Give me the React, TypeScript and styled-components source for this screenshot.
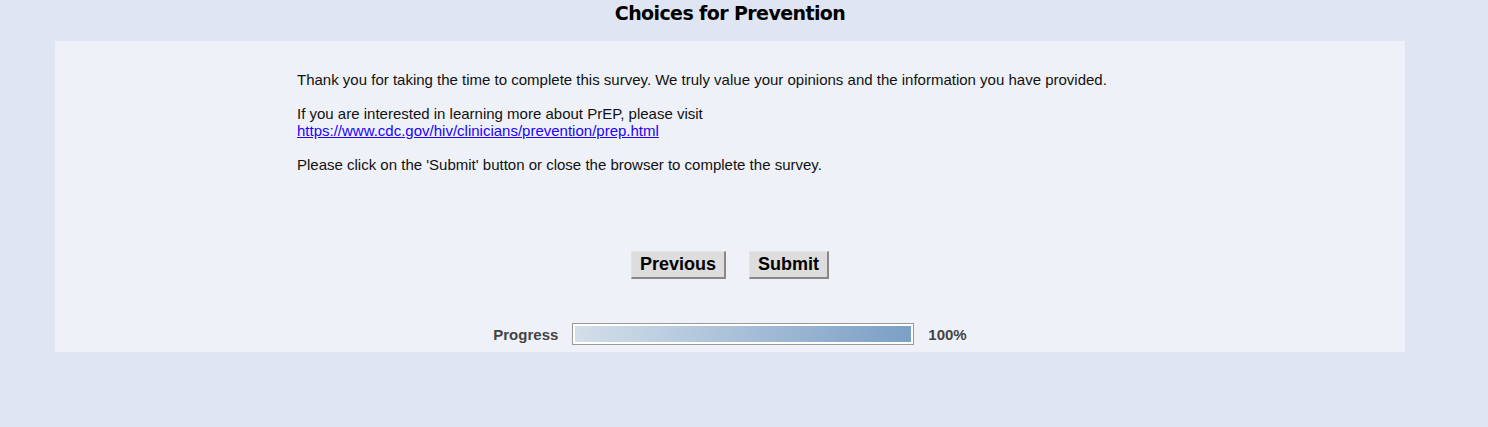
import React from "react";
import styled, { createGlobalStyle } from "styled-components";

const Global = createGlobalStyle`
  html, body { margin: 0; padding: 0; background: #dfe5f2; }
  body { font-family: "Liberation Sans", Arial, sans-serif; }
`;

const Page = styled.div`
  width: 1488px;
  height: 427px;
  box-sizing: border-box;
  padding-left: 55px;
  background: #dfe5f2;
  display: flex;
  flex-direction: column;
  align-items: flex-start;
`;

const Title = styled.h1`
  margin: 0;
  width: 1350px;
  height: 41px;
  box-sizing: border-box;
  padding-top: 1px;
  font-family: "DejaVu Sans", Verdana, sans-serif;
  font-weight: bold;
  font-size: 19px;
  line-height: 24px;
  letter-spacing: -0.6px;
  color: #000;
  text-align: center;
`;

const Panel = styled.div`
  width: 1350px;
  height: 311px;
  background: #eef2f8;
  display: flex;
  flex-direction: column;
  align-items: center;
`;

const Content = styled.div`
  width: 866px;
  padding-top: 30px;
  font-size: 15px;
  line-height: 17px;
  color: #111;
`;

const Para = styled.p`
  margin: 0 0 17px 0;
`;

const Link = styled.a`
  color: #2200ff;
  text-decoration: underline;
`;

const Buttons = styled.div`
  display: flex;
  gap: 23px;
  margin-top: 61px;
  justify-content: center;
`;

const Button = styled.button`
  height: 28px;
  padding: 0 8px;
  font-family: "Liberation Sans", Arial, sans-serif;
  font-weight: bold;
  font-size: 18px;
  color: #000;
  background: #dddddd;
  border-style: solid;
  border-width: 1px 2px 2px 1px;
  border-color: #e4e4e4 #888888 #888888 #e4e4e4;
  box-sizing: border-box;
  cursor: pointer;
`;

const ProgressRow = styled.div`
  display: flex;
  align-items: center;
  margin-top: 44px;
  gap: 14px;
  font-weight: bold;
  font-size: 15px;
  line-height: 17px;
  color: #444;
`;

const Bar = styled.div`
  width: 342px;
  height: 22px;
  box-sizing: border-box;
  border: 1px solid #999;
  background: #fff;
  padding: 2px;
`;

const Fill = styled.div`
  height: 100%;
  background: linear-gradient(to right, #d3dfe9, #7b9fc6);
`;

export default function App() {
  const pct = 100;
  return (
    <>
      <Global />
      <Page>
        <Title>Choices for Prevention</Title>
        <Panel>
          <Content>
            <Para>
              Thank you for taking the time to complete this survey. We truly value your opinions and the
              information you have provided.
            </Para>
            <Para>
              If you are interested in learning more about PrEP, please visit
              <br />
              <Link href="#">https://www.cdc.gov/hiv/clinicians/prevention/prep.html</Link>
            </Para>
            <Para>Please click on the 'Submit' button or close the browser to complete the survey.</Para>
          </Content>
          <Buttons>
            <Button>Previous</Button>
            <Button>Submit</Button>
          </Buttons>
          <ProgressRow>
            <span>Progress</span>
            <Bar>
              <Fill style={{ width: `${pct}%` }} />
            </Bar>
            <span>100%</span>
          </ProgressRow>
        </Panel>
      </Page>
    </>
  );
}
